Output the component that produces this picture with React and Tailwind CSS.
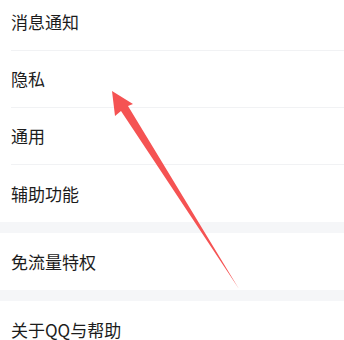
const groups = [
  ["消息通知", "隐私", "通用", "辅助功能"],
  ["免流量特权"],
  ["关于QQ与帮助"],
];

function Row({ label, last }) {
  return (
    <div className="pl-[11px] bg-white">
      <div
        className={
          "h-[57px] flex items-center text-[17px] text-[#1c1c1c] " +
          (last ? "" : "border-b border-[#f1f2f4]")
        }
      >
        {label}
      </div>
    </div>
  );
}

function Arrow() {
  return (
    <svg
      className="absolute left-0 top-0 pointer-events-none"
      width="344"
      height="340"
      viewBox="0 0 344 340"
    >
      <polygon
        points="112,91 115,116 121,111 239,289 128,106 133,104"
        fill="#f55353"
      />
    </svg>
  );
}

export default function App() {
  return (
    <div
      className="relative w-[344px] h-[340px] overflow-hidden bg-[#f5f6f8]"
      style={{ fontFamily: '"Noto Sans CJK SC", "Noto Sans", sans-serif' }}
    >
      <div className="-mt-[6px] flex flex-col gap-[11px]">
        {groups.map((items, gi) => (
          <div key={gi} className="bg-white">
            {items.map((label, i) => (
              <Row key={label} label={label} last={i === items.length - 1} />
            ))}
          </div>
        ))}
      </div>
      <Arrow />
    </div>
  );
}
